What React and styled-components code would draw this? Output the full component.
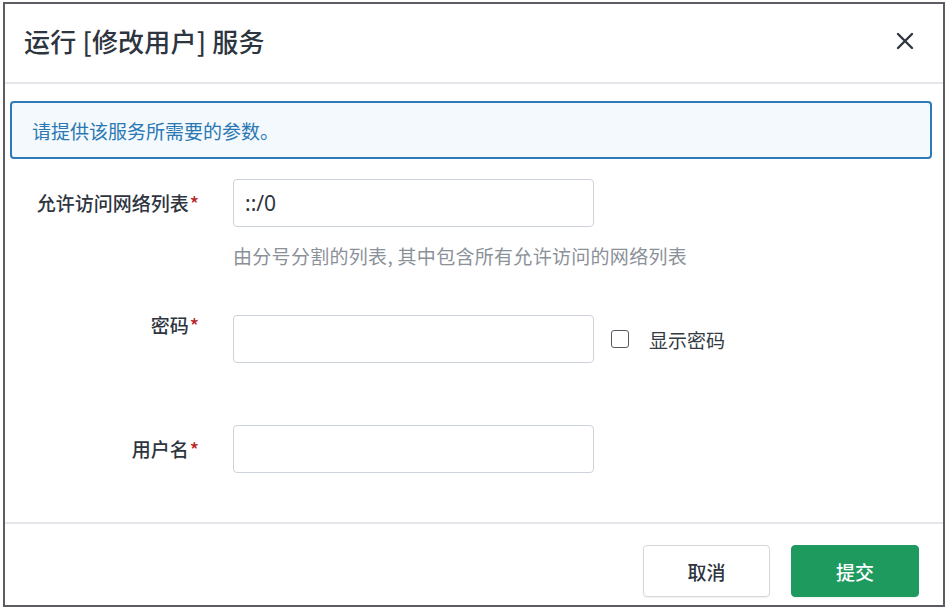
import React, { useState } from 'react';
import styled, { createGlobalStyle } from 'styled-components';

const GlobalStyle = createGlobalStyle`
  html, body {
    margin: 0;
    padding: 0;
    background: #fff;
  }
  body {
    font-family: "Noto Sans CJK SC", "Noto Sans", sans-serif;
    color: #2e353f;
  }
  * { box-sizing: border-box; }
`;

const Frame = styled.div`
  width: 948px;
  height: 610px;
  padding: 2px 3px 3px 3px;
`;

const Dialog = styled.div`
  height: 100%;
  display: flex;
  flex-direction: column;
  border: 2px solid #5c5c63;
  background: #fff;
`;

const Header = styled.div`
  height: 80px;
  flex: none;
  display: flex;
  align-items: center;
  justify-content: space-between;
  padding: 0 26px 5px 19px;
  border-bottom: 2px solid #e4e6e9;
`;

const Title = styled.h2`
  margin: 0;
  font-size: 26px;
  font-weight: 500;
  color: #2d3540;
  letter-spacing: 0.2px;
`;

const CloseButton = styled.button`
  width: 24px;
  height: 24px;
  padding: 0;
  border: none;
  background: none;
  display: flex;
  align-items: center;
  justify-content: center;
  cursor: pointer;
  color: #2f3640;
`;

const Body = styled.div`
  flex: 1;
  padding: 17px 11px 0 5px;
`;

const Alert = styled.div`
  height: 58px;
  display: flex;
  align-items: center;
  padding: 0 20px;
  border: 2px solid #2c7bb8;
  border-radius: 4px;
  background: #f4f9fd;
  color: #2a78b4;
  font-size: 19px;
`;

const Form = styled.div`
  padding-top: 20px;
  display: flex;
  flex-direction: column;
`;

const Row = styled.div`
  display: flex;
  align-items: ${p => (p.$top ? 'flex-start' : 'center')};
  margin-bottom: ${p => p.$gap || 0}px;
`;

const Label = styled.label`
  width: 189px;
  flex: none;
  align-self: ${p => (p.$offset ? 'flex-start' : 'auto')};
  text-align: right;
  font-size: 19px;
  font-weight: 500;
  line-height: 20px;
  color: #2e353f;
  padding-top: ${p => p.$offset || 0}px;
`;

const Star = styled.span`
  color: #b8262b;
  margin-left: 1px;
`;

const Field = styled.div`
  margin-left: 34px;
  display: flex;
  flex-direction: column;
`;

const InputLine = styled.div`
  display: flex;
  align-items: center;
`;

const Input = styled.input`
  width: 361px;
  height: 48px;
  border: 1px solid #cdd3db;
  border-radius: 4px;
  padding: 0 11px;
  font-family: "Noto Sans", "Noto Sans CJK SC", sans-serif;
  font-size: 21px;
  color: #2e353f;
  outline: none;
`;

const Help = styled.div`
  margin-top: 16px;
  font-size: 19px;
  line-height: 26px;
  color: #8b9199;
  letter-spacing: 0.3px;
`;

const CheckWrap = styled.label`
  display: flex;
  align-items: center;
  margin-left: 17px;
  font-size: 19px;
  color: #333a44;
  cursor: pointer;
`;

const Box = styled.span`
  width: 18px;
  height: 18px;
  border: 1.5px solid #55595f;
  border-radius: 3px;
  margin-right: 20px;
  display: inline-block;
  background: ${p => (p.$on ? '#1f9a5e' : '#fff')};
`;

const Footer = styled.div`
  flex: none;
  height: 83px;
  border-top: 2px solid #e4e6e9;
  display: flex;
  align-items: flex-start;
  justify-content: flex-end;
  gap: 21px;
  padding: 21px 24px 0 0;
`;

const Button = styled.button`
  width: ${p => (p.$primary ? 128 : 127)}px;
  height: 52px;
  border-radius: 4px;
  font-family: "Noto Sans CJK SC", sans-serif;
  font-size: 19px;
  font-weight: 500;
  cursor: pointer;
  border: 1px solid ${p => (p.$primary ? '#1f9a5e' : '#d4d8dd')};
  background: ${p => (p.$primary ? '#1f9a5e' : '#fff')};
  color: ${p => (p.$primary ? '#fff' : '#2e353f')};
  box-shadow: 0 1px 2px rgba(0, 0, 0, 0.06);
`;

export default function App() {
  const [show, setShow] = useState(false);
  return (
    <Frame>
      <GlobalStyle />
      <Dialog>
        <Header>
          <Title>运行 [修改用户] 服务</Title>
          <CloseButton aria-label="close">
            <svg width="18" height="18" viewBox="0 0 18 18">
              <path d="M2 2 L16 16 M16 2 L2 16" stroke="currentColor" strokeWidth="2.4" strokeLinecap="round" />
            </svg>
          </CloseButton>
        </Header>
        <Body>
          <Alert>请提供该服务所需要的参数。</Alert>
          <Form>
            <Row $gap={46}>
              <Label $offset={14}>允许访问网络列表<Star>*</Star></Label>
              <Field>
                <Input defaultValue="::/0" />
                <Help>由分号分割的列表, 其中包含所有允许访问的网络列表</Help>
              </Field>
            </Row>
            <Row $top $gap={62}>
              <Label>密码<Star>*</Star></Label>
              <Field>
                <InputLine>
                  <Input type={show ? 'text' : 'password'} />
                  <CheckWrap onClick={() => setShow(!show)}>
                    <Box $on={show} />
                    显示密码
                  </CheckWrap>
                </InputLine>
              </Field>
            </Row>
            <Row>
              <Label>用户名<Star>*</Star></Label>
              <Field>
                <Input />
              </Field>
            </Row>
          </Form>
        </Body>
        <Footer>
          <Button>取消</Button>
          <Button $primary>提交</Button>
        </Footer>
      </Dialog>
    </Frame>
  );
}
